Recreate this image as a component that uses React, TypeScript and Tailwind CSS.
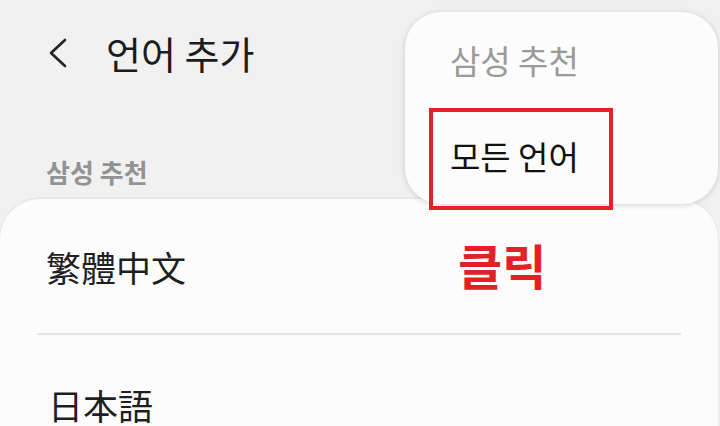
const kr = "font-['Noto_Sans_CJK_KR',sans-serif]";

function BackIcon() {
  return (
    <svg width="22" height="32" viewBox="0 0 22 32" fill="none" className="text-[#222]">
      <path d="M18 3 L4 16 L18 29" stroke="currentColor" strokeWidth="2.6" strokeLinecap="round" strokeLinejoin="round" />
    </svg>
  );
}

function PopupMenu() {
  return (
    <div className="absolute left-[405px] top-[12px] w-[313px] h-[192px] rounded-[36px] bg-[#fcfcfc] shadow-[0_1px_6px_rgba(0,0,0,0.16)]">
      <div className="h-[96px] flex items-center pl-[45px]">
        <span className={`${kr} text-[33px] leading-none text-[#9a9a9a]`}>삼성 추천</span>
      </div>
      <div className="relative h-[96px] flex items-center pl-[45px]">
        <span className={`${kr} text-[33px] leading-none text-[#111]`}>모든 언어</span>
        {/* annotation box */}
        <div className="absolute left-[24px] top-0 w-[184px] h-[102px] border-[4px] border-[#e8202a]" />
      </div>
    </div>
  );
}

export default function App() {
  return (
    <div className="relative w-[720px] h-[426px] overflow-hidden bg-[#f1f1f1]">
      {/* Header */}
      <div className="h-[106px] flex items-center pl-[47px]">
        <BackIcon />
        <h1 className={`${kr} ml-[37px] text-[38px] leading-none font-normal text-[#1c1c1c]`}>언어 추가</h1>
      </div>

      {/* Section label */}
      <div className="h-[93px] flex items-end pb-[14px] pl-[46px]">
        <span className={`${kr} text-[26px] leading-[26px] font-bold text-[#939393]`}>삼성 추천</span>
      </div>

      {/* Card */}
      <div className="mr-[2px] rounded-t-[40px] bg-[#fcfcfc] shadow-[0_-1px_2px_rgba(0,0,0,0.07)]">
        <div className="h-[134px] flex items-center pl-[46px]">
          <span className="font-['Noto_Sans_CJK_TC',sans-serif] text-[35px] leading-none text-[#1f1f1f]">繁體中文</span>
        </div>
        <div className="mx-[37px] h-[2px] bg-[#e3e3e3]" />
        <div className="h-[138px] flex items-center pl-[48px]">
          <span className="font-['Noto_Sans_CJK_JP',sans-serif] text-[35px] leading-none text-[#1f1f1f]">日本語</span>
        </div>
      </div>

      <PopupMenu />

      {/* annotation */}
      <span className={`${kr} absolute left-[458px] top-[240px] text-[48px] leading-none font-bold text-[#e41f26]`}>클릭</span>
    </div>
  );
}
